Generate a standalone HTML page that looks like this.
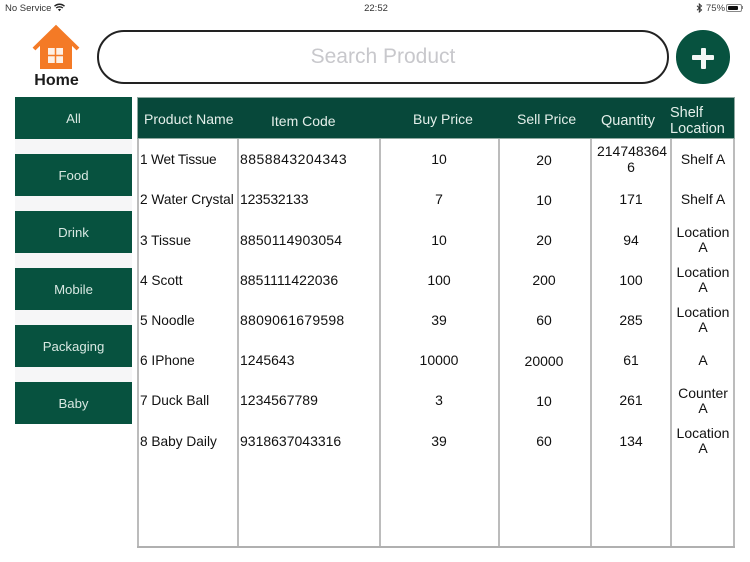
<!DOCTYPE html>
<html><head><meta charset="utf-8">
<style>
html,body{margin:0;padding:0;background:#fff}
#p{position:relative;width:750px;height:562px;overflow:hidden;background:#fff;font-family:"Liberation Sans",sans-serif;color:#111}
.t{position:absolute;white-space:nowrap;font-size:14px;line-height:16px;transform:translateY(-50%)}
.n{font-size:13.7px;margin-top:1px}
.c{transform:translate(-50%,-50%);text-align:center}
.w{color:#e4efea;font-size:14px}
.b{position:absolute;left:15px;width:117px;height:42px;background:#07523f;color:#d8e8e2;font-size:13.2px;line-height:44px;text-align:center}
.v{position:absolute;top:139px;height:408px;width:2px;background:#bcbcbc}
</style></head><body><div id="p">
<div class="t" style="left:5px;top:9px;font-size:9.5px;color:#333">No Service</div>
<svg style="position:absolute;left:54px;top:3px" width="11" height="9" viewBox="0 0 11 9"><path d="M0.5 3.2C3.4 .6 7.6 .6 10.5 3.2M2.2 5C4 3.400 7 3.400 8.800 5" fill="none" stroke="#222" stroke-width="1.4"/><path d="M3.900 6.400C4.800 5.700 6.200 5.700 7.100 6.400L5.500 8.200Z" fill="#222"/></svg>
<div class="t c" style="left:376px;top:9px;font-size:9.5px;color:#333">22:52</div>
<svg style="position:absolute;left:696px;top:3px" width="7" height="10" viewBox="0 0 7 10"><path d="M1 2.800L5.500 7 3.300 9V1L5.500 3 1 7.200" fill="none" stroke="#333" stroke-width="1"/></svg>
<div class="t" style="left:706px;top:9px;font-size:9.5px;color:#444">75%</div>
<div style="position:absolute;left:726px;top:4px;width:14px;height:6px;border:1px solid #888;border-radius:2px"></div>
<div style="position:absolute;left:727.500px;top:5.500px;width:10px;height:4px;background:#111;border-radius:1px"></div>
<div style="position:absolute;left:742px;top:6px;width:1px;height:3px;background:#888"></div>

<svg style="position:absolute;left:31px;top:24px" width="49" height="48" viewBox="0 0 49 48">
<path d="M9 20L25 4 41 20V45H9Z" fill="#f47a26"/>
<path d="M3 25L25 3.500 47 25" fill="none" stroke="#f47a26" stroke-width="4" stroke-linejoin="miter"/>
<rect x="17" y="24" width="15" height="15" fill="#fdf0e6"/>
<path d="M24.500 24V39M17 31.500H32" stroke="#f47a26" stroke-width="1.500"/>
</svg>
<div class="t c" style="left:56.500px;top:81px;font-size:16px;font-weight:bold;color:#1c1c1c">Home</div>

<div style="position:absolute;left:97px;top:30px;width:568px;height:49.500px;border:2px solid #222;border-radius:27px;background:#fff"></div>
<div class="t c" style="left:383px;top:57px;font-size:21px;line-height:26px;color:#c8c8cc">Search Product</div>

<div style="position:absolute;left:676px;top:30px;width:53.500px;height:53.500px;border-radius:50%;background:#07523f"></div>
<div style="position:absolute;left:692px;top:55px;width:21.500px;height:5px;border-radius:1px;background:#f2f7f5"></div>
<div style="position:absolute;left:700.500px;top:47.500px;width:5px;height:21.500px;border-radius:1px;background:#f2f7f5"></div>

<div style="position:absolute;left:15px;top:139px;width:117px;height:243px;background:#f6f6f7"></div>
<div class="b" style="top:97px">All</div>
<div class="b" style="top:154px">Food</div>
<div class="b" style="top:211px">Drink</div>
<div class="b" style="top:268px">Mobile</div>
<div class="b" style="top:325px">Packaging</div>
<div class="b" style="top:382px">Baby</div>

<div style="position:absolute;left:137px;top:97px;width:598px;height:42px;background:#07483a;box-shadow:inset 0 0 0 1px #8fa8a0"></div>
<div class="v" style="left:137px"></div>
<div class="v" style="left:237px"></div>
<div class="v" style="left:379px"></div>
<div class="v" style="left:498px"></div>
<div class="v" style="left:590px"></div>
<div class="v" style="left:670px"></div>
<div class="v" style="left:733px"></div>
<div style="position:absolute;left:137px;top:546px;width:598px;height:2px;background:#b0b0b0"></div>

<div class="t w" style="left:144px;top:118.500px">Product Name</div>
<div class="t w" style="left:271px;top:120.500px">Item Code</div>
<div class="t w" style="left:413px;top:118.500px">Buy Price</div>
<div class="t w" style="left:517px;top:118.500px">Sell Price</div>
<div class="t w" style="left:601px;top:120.500px;font-size:14.500px">Quantity</div>
<div class="t w" style="left:670px;top:112.500px;font-size:14.500px">Shelf</div>
<div class="t w" style="left:670px;top:128.500px;font-size:14.500px">Location</div>

<div class="t n" style="left:140px;top:159px;letter-spacing:-.2px">1 Wet Tissue</div><div class="t" style="left:240px;top:159px;letter-spacing:.45px">8858843204343</div><div class="t c" style="left:439px;top:159px">10</div><div class="t c" style="left:544px;top:160px">20</div><div class="t c" style="left:632px;top:151px">214748364</div><div class="t c" style="left:631px;top:167px">6</div><div class="t c" style="left:703px;top:159px">Shelf A</div>
<div class="t n" style="left:140px;top:199px">2 Water Crystal</div><div class="t" style="left:240px;top:199px;letter-spacing:-.2px">123532133</div><div class="t c" style="left:439px;top:199px">7</div><div class="t c" style="left:544px;top:200px">10</div><div class="t c" style="left:631px;top:199px">171</div><div class="t c" style="left:703px;top:199px">Shelf A</div>
<div class="t n" style="left:140px;top:240px">3 Tissue</div><div class="t" style="left:240px;top:240px;letter-spacing:.15px">8850114903054</div><div class="t c" style="left:439px;top:240px">10</div><div class="t c" style="left:544px;top:240px">20</div><div class="t c" style="left:631px;top:240px">94</div><div class="t c" style="left:703px;top:232px">Location</div><div class="t c" style="left:703px;top:247px">A</div>
<div class="t n" style="left:140px;top:280px">4 Scott</div><div class="t" style="left:240px;top:280px">8851111422036</div><div class="t c" style="left:439px;top:280px">100</div><div class="t c" style="left:544px;top:280px">200</div><div class="t c" style="left:631px;top:280px">100</div><div class="t c" style="left:703px;top:272px">Location</div><div class="t c" style="left:703px;top:287px">A</div>
<div class="t n" style="left:140px;top:320px">5 Noodle</div><div class="t" style="left:240px;top:320px;letter-spacing:.25px">8809061679598</div><div class="t c" style="left:439px;top:320px">39</div><div class="t c" style="left:544px;top:320px">60</div><div class="t c" style="left:631px;top:320px">285</div><div class="t c" style="left:703px;top:312px">Location</div><div class="t c" style="left:703px;top:327px">A</div>
<div class="t n" style="left:140px;top:360px">6 IPhone</div><div class="t" style="left:240px;top:360px">1245643</div><div class="t c" style="left:439px;top:360px">10000</div><div class="t c" style="left:544px;top:361px">20000</div><div class="t c" style="left:631px;top:360px">61</div><div class="t c" style="left:703px;top:360px">A</div>
<div class="t n" style="left:140px;top:400px">7 Duck Ball</div><div class="t" style="left:240px;top:400px">1234567789</div><div class="t c" style="left:439px;top:400px">3</div><div class="t c" style="left:544px;top:401px">10</div><div class="t c" style="left:631px;top:400px">261</div><div class="t c" style="left:703px;top:393px">Counter</div><div class="t c" style="left:703px;top:408px">A</div>
<div class="t n" style="left:140px;top:441px">8 Baby Daily</div><div class="t" style="left:240px;top:441px">9318637043316</div><div class="t c" style="left:439px;top:441px">39</div><div class="t c" style="left:544px;top:441px">60</div><div class="t c" style="left:631px;top:441px">134</div><div class="t c" style="left:703px;top:433px">Location</div><div class="t c" style="left:703px;top:448px">A</div>
</div></body></html>
